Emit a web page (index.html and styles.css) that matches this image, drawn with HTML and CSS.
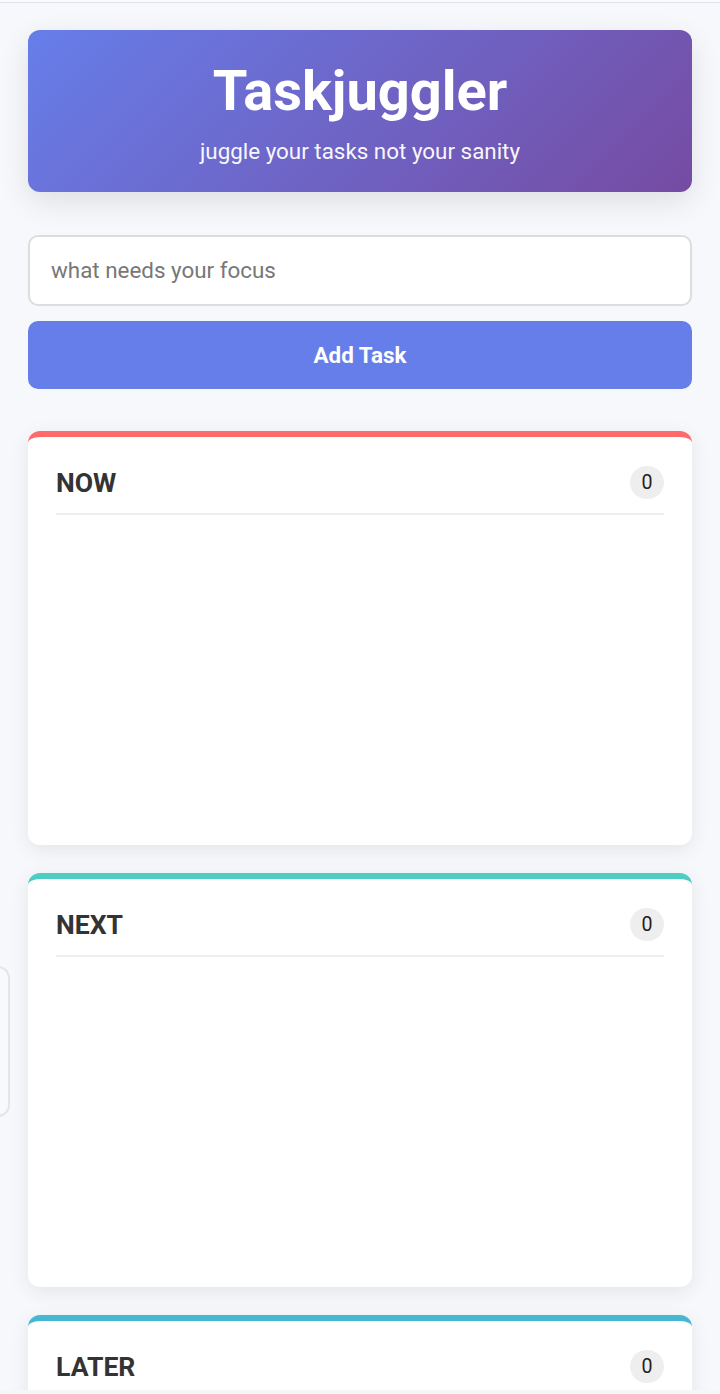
FILE: index.html
```html
<!DOCTYPE html>
<html lang="en">
<head>
<meta charset="utf-8">
<title>Taskjuggler</title>
<link rel="stylesheet" href="styles.css">
</head>
<body>
<div class="topbar"></div>
<main class="app">
  <header class="hero">
    <h1 class="hero-title">Taskjuggler</h1>
    <p class="hero-sub">juggle your tasks not your sanity</p>
  </header>

  <form class="add-form">
    <input class="task-input" type="text" placeholder="what needs your focus">
    <button class="add-btn" type="button">Add Task</button>
  </form>

  <section class="column col-now">
    <div class="col-head">
      <h2 class="col-title">NOW</h2>
      <span class="count">0</span>
    </div>
    <div class="col-list"></div>
  </section>

  <section class="column col-next">
    <div class="col-head">
      <h2 class="col-title">NEXT</h2>
      <span class="count">0</span>
    </div>
    <div class="col-list"></div>
  </section>

  <section class="column col-later">
    <div class="col-head">
      <h2 class="col-title">LATER</h2>
      <span class="count">0</span>
    </div>
    <div class="col-list"></div>
  </section>
</main>
<aside class="drawer"></aside>
<div class="bottom-strip"></div>
</body>
</html>
```

FILE: styles.css
```css
* {
  box-sizing: border-box;
}

html, body {
  margin: 0;
  padding: 0;
}

body {
  background: #f7f8fc;
  font-family: Roboto, "Liberation Sans", Arial, sans-serif;
  color: #333;
}

.topbar {
  height: 3px;
  background: #f9fafc;
  border-bottom: 1px solid #dfe3ec;
}

.app {
  padding: 27px 28px 40px;
}

.hero {
  background: linear-gradient(135deg, #667eea 0%, #764ba2 100%);
  border-radius: 12px;
  padding: 28px;
  text-align: center;
  color: #fff;
  box-shadow: 0 10px 30px rgba(0, 0, 0, 0.1);
  margin-bottom: 43px;
}

.hero-title {
  margin: 0 0 14px;
  font-size: 56px;
  font-weight: 700;
  line-height: normal;
}

.hero-sub {
  margin: 0;
  font-size: 22.4px;
  line-height: normal;
  opacity: 0.95;
}

.add-form {
  display: flex;
  flex-direction: column;
  gap: 15px;
  margin-bottom: 42px;
}

.task-input {
  width: 100%;
  border: 2px solid #dddddd;
  border-radius: 10px;
  padding: 20.4px 21px;
  font-family: inherit;
  font-size: 22.4px;
  line-height: normal;
  background: #fff;
  color: #333;
  outline: none;
}

.task-input::placeholder {
  color: #777;
}

.add-btn {
  width: 100%;
  border: none;
  border-radius: 10px;
  background: #667eea;
  color: #fff;
  font-family: inherit;
  font-size: 22.4px;
  font-weight: 700;
  line-height: normal;
  padding: 20.9px;
}

.column {
  background: #fff;
  border-radius: 12px;
  border-top: 6px solid #ff6b6b;
  padding: 29px 28px 28px;
  min-height: 414px;
  margin-bottom: 28px;
  box-shadow: 0 5px 20px rgba(0, 0, 0, 0.08);
}

.col-next {
  border-top-color: #4ecdc4;
}

.col-later {
  border-top-color: #45b7d1;
}

.col-head {
  display: flex;
  justify-content: space-between;
  align-items: center;
  padding-bottom: 14px;
  border-bottom: 2px solid #eeeeee;
}

.col-title {
  margin: 0;
  font-size: 26.6px;
  font-weight: 700;
  line-height: normal;
  color: #333;
}

.count {
  background: #eeeeee;
  color: #222;
  border-radius: 17px;
  padding: 5px 11.5px;
  min-width: 34px;
  text-align: center;
  font-size: 19.6px;
  line-height: normal;
}

.drawer {
  position: fixed;
  left: -200px;
  top: 966px;
  width: 210px;
  height: 151px;
  background: #f8f9fc;
  border: 2px solid #e3e5ea;
  border-radius: 12px;
}

.bottom-strip {
  position: fixed;
  left: 0;
  right: 0;
  bottom: 0;
  height: 4px;
  background: #f5f6fa;
}
```
